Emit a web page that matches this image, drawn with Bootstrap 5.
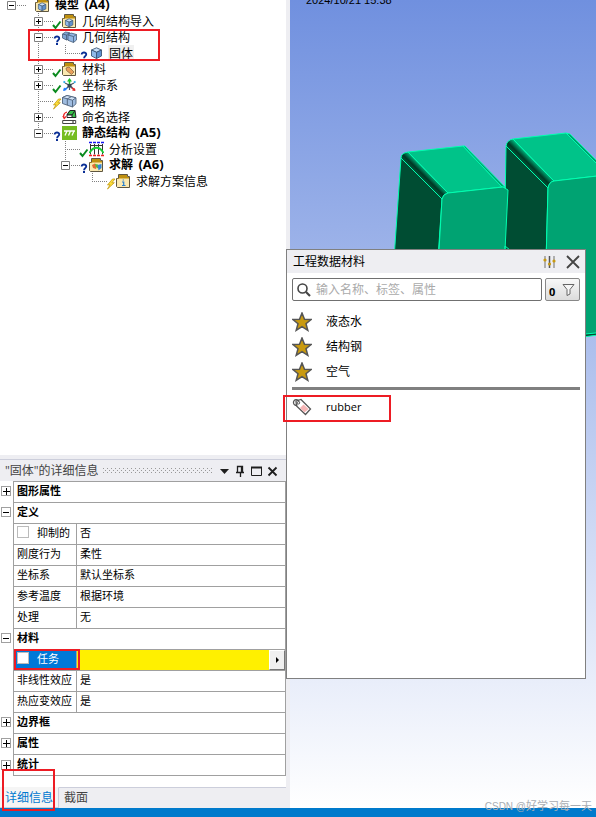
<!DOCTYPE html>
<html lang="zh-CN">
<head>
<meta charset="utf-8">
<meta name="viewport" content="width=device-width, initial-scale=1">
<title>工程数据材料</title>
<link href="https://cdn.jsdelivr.net/npm/bootstrap@5.3.0/dist/css/bootstrap.min.css" rel="stylesheet">
<style>
body{font-family:"Open Sans","Noto Sans CJK SC",sans-serif;font-size:12px;line-height:16px;color:#000;background:#eeeef2}
button{font-family:inherit}
.side-pane{flex:0 0 286px;width:286px}
.splitter{flex:0 0 4px;background:#eeeef2}
.tree-area{min-height:200px}
.tree-list{margin:-3px 0 0;padding-left:7px}
.tree-list li{display:flex;height:16px;white-space:nowrap}
.tree-list svg{flex:none}
.guide{width:27px;height:16px}
.own{width:28px;height:16px;overflow:visible}
.node-icon{width:15px;height:16px;margin-right:5px}
.node-label{padding:0 1px;margin-left:-1px;line-height:18px}
.node-label.picked{background:#f0f0f0}
b.node-label{line-height:16px}
.node-label i{font-style:normal;font-size:13px;line-height:14px;margin-left:2px}
.details{border-top:4px solid #eeeef2}
.details-head{height:22px;background:#eeeef2;border-top:1px solid #cccedb;color:#444;padding:0 6px 0 5px}
.grip{height:6px;margin:0 4px 0 4px;background:conic-gradient(from 270deg at 1px 1px,#999 90deg,transparent 0) 0 0/4px 4px,conic-gradient(from 270deg at 1px 1px,#999 90deg,transparent 0) 2px 2px/4px 4px}
.tool{border:0;background:none;padding:0;width:16px;height:16px;line-height:0}
.prop-table{width:100%;table-layout:fixed;font-size:11px;line-height:16px;border-collapse:separate;border-spacing:0}
.col-tog{width:13px}
.col-name{width:63px}
.prop-table th,.prop-table td{height:21px;padding:0 0 2px 3px;white-space:nowrap;overflow:hidden;font-weight:400;border-top:1px solid #a0a0a0}
.prop-table .c-tog{padding:0 0 1px 1px;border:0;line-height:0}
.prop-table .c-name,.prop-table .c-val{border-left:1px solid #a0a0a0}
.prop-table tr>:last-child{border-right:1px solid #a0a0a0}
.prop-table tr:last-child .c-name{border-bottom:1px solid #a0a0a0;height:22px}
.prop-table .sec{font-weight:700}
.tog{width:10px;height:10px;padding:0;border:1px solid #a0a0a0;background:#fff;line-height:0;display:block}
.tog svg{display:block}
.tick{appearance:none;width:12px;height:12px;border:1px solid #bbb;background:#fff;margin:0 8px 0 0;vertical-align:-1px}
.prop-table .active-name{background:#0078d7;color:#fff}
.prop-table .active-val{background:#fff000;padding:0}
.fly{width:16px;height:20px;background:#f0f0f0;border:1px solid #fff;border-right-color:#777;border-bottom-color:#777;padding:0;line-height:0}
.tab-row{height:21px;margin-top:11px;background:#eeeef2}
.tab-row button{border:0;border-top:1px solid #cccedb;background:none;padding:0 5px;color:#444;text-align:left}
.tab-row .rest{border-top:1px solid #cccedb}
.tab-row button.on{background:#f5f5f5;color:#0078d0;border-top-color:#f5f5f5;border-right:1px solid #cccedb;border-bottom:1px solid #cccedb;width:59px}
.view3d{background:linear-gradient(#7090df,#fff);min-width:0}
.stamp{font:11px/12px "Liberation Sans",sans-serif;margin:-6px 0 0 16px;white-space:nowrap}
.scene{left:0;top:0;width:306px;height:340px}
.status-strip{height:9px;background:#007acc}
.picker{left:286px;top:249px;width:300px;height:430px;background:#fff;border:1px solid #808080}
.picker-head{height:23px;background:#eeeef2;padding:0 4px 0 6px}
.search-row{gap:3px;padding:5px 5px 0}
.search-box{height:23px;border:1px solid #707070;border-radius:2px;padding-left:3px}
.search-box input{border:0;outline:0;background:none;min-width:0;padding:0;font-size:12px}
.search-box input::placeholder{color:#aaa;opacity:1}
.filter-btn{width:35px;height:23px;border:1px solid #888;border-radius:2px;background:linear-gradient(#f8f8f8,#dcdcdc);padding:0 4px 0 3px;font-size:11px}
.mat-list{padding:8px 5px 0}
.mat-list li{height:25px}
.mat-list button,.tagged button{border:0;background:none;padding:0;gap:14px;height:25px;width:100%;text-align:left}
.sep{height:3px;background:#808080;margin:3px 5px 0 5px}
.tagged{padding:4px 5px 0}
.tagged span{font-size:11px}
.note{border:2px solid #ed1c24;pointer-events:none}
.n1{left:28px;top:29px;width:132px;height:32px}
.n2{left:283px;top:395px;width:108px;height:27px}
.n3{left:14px;bottom:147px;width:66px;height:21px}
.n4{left:2px;bottom:6px;width:53px;height:42px}
.credit{right:4px;bottom:4px;color:#a9adb3;font-size:11px;font-family:"Noto Sans CJK SC",sans-serif;white-space:nowrap}
.credit span{font:10px "Liberation Sans",sans-serif}
</style>
<script src="https://cdn.jsdelivr.net/npm/bootstrap@5.3.0/dist/js/bootstrap.bundle.min.js"></script>
</head>
<body>
<svg width="0" height="0" class="position-absolute" aria-hidden="true">
<defs>
<g id="vfull" stroke="#808080" stroke-dasharray="1 1"><path d="M4.500 0V16"/></g>
<g id="vhalf" stroke="#808080" stroke-dasharray="1 1"><path d="M4.500 0V8"/></g>
<g id="hz" stroke="#808080" stroke-dasharray="1 1"><path d="M4 8.500H19"/></g>
<g id="plus"><path d="M.5 4.500h8v8h-8z" fill="#fff" stroke="#808080"/><path d="M2 8.500h5M4.500 6v5" stroke="#000"/></g>
<g id="minus"><path d="M.5 4.500h8v8h-8z" fill="#fff" stroke="#808080"/><path d="M2 8.500h5" stroke="#000"/></g>
<g id="ok"><path d="M19 12l2.500 3 5-6.500" fill="none" stroke="#0a8a1e" stroke-width="2"/></g>
<g id="ask"><path d="M20.700 9.500c-.2-2.600 4.800-2.600 4.500 0-.2 1.700-2.100 1.700-2.100 3.700" fill="none" stroke="#0a2f95" stroke-width="1.900"/><path d="M22 14h2v2h-2z" fill="#0a2f95"/></g>
<g id="bolt"><path d="M24.500 6l-5 6 2.600-.3-2.600 4.300 6.800-6.300-2.500.1L27 6z" fill="#ffe13a" stroke="#c39a10" stroke-width=".8"/></g>
<g id="folder"><path d="M.5 5.500h2v-4h9v2h2v11h-12l-1-1z" fill="#fbe9b0" stroke="#5f5640"/><path d="M3 2h8v2h2v1.500H1V5h2z" fill="#bf900f"/></g>
<g id="cube" stroke="#3b5676" stroke-width=".9" stroke-linejoin="round"><path d="M2.500 5l5-2.200 5 2.200-5 2.300z" fill="#c9e1fb"/><path d="M2.500 5v6l5 2.500V7.300z" fill="#8fb9ea"/><path d="M12.500 5v6l-5 2.500V7.300z" fill="#5f91cf"/></g>
<g id="minicube"><use href="#cube" transform="translate(1.500 3.700) scale(.75)"/></g>
<g id="parts" stroke="#455a75" stroke-width=".8" stroke-linejoin="round"><path d="M.5 5l3-2 4 .7v6l-3 1.300-4-2z" fill="#7ea4d2"/><path d="M.5 5l4 1 3-2.300M4.500 6v5" fill="none"/><path d="M6 6l3-2 5.500 1.500V11l-3 2.500L6 11.300z" fill="#90b6e4"/><path d="M6 6l5.500 1.500 3-2M11.500 7.500v6" fill="none"/></g>
<g id="meshi" stroke="#4e627c" stroke-width=".9" stroke-linejoin="round"><path d="M.5 4.500L5 2.500l9 2.300v6L10.500 14 .5 10.500z" fill="#9fbce0"/><path d="M.5 4.500l4.500-2 9 2.300-3.500 2.400z" fill="#d3e2f4"/><path d="M10.500 7.200V14M5.300 5.900v6.200M5.300 5.900l4-2.200" fill="none"/></g>
<g id="tagfold"><use href="#folder"/><path d="M4 7l3-1 5 5-2.500 2.500-5-4z" fill="#e9a15c" stroke="#8b6a45" stroke-width=".8"/></g>
<g id="axes" fill="none" stroke-width="1.600"><path d="M7.500 8V2.500" stroke="#18b428"/><path d="M5 4.500l2.500-3.500L10 4.500z" fill="#18c428"/><path d="M7.500 9l3 2M7.500 9L5 11" stroke="#4b5968"/><path d="M13.500 14l-1-3-2.500 2.500z" fill="#e02c2c"/><path d="M10 11l3 2" stroke="#e02c2c"/><path d="M8 8l4-2M7 8L3 6M7.500 9v4" stroke="#4b5968" stroke-width="1.200"/><path d="M1 14l1-3.500L4.700 13z" fill="#1d7cff"/><path d="M5 11l-3 2" stroke="#1d7cff"/><path d="M5.500 7h4v3h-4z" fill="#345"/><path d="M1.500 4.500l1.500 1M12 5.500l1.500-1" stroke="#18a6e8"/></g>
<g id="named"><path d="M5 6l3-4.500h5L14 8.500h-4z" fill="#37c24b" stroke="#222"/><path d="M5 6l3-4.500h5L10 6z" fill="#37c24b" stroke="#222"/><path d="M10 6v2.500H5V6z" fill="#fff" stroke="#222"/><path d="M2 9c-1-3 0-5 3-6M.8 7l1.400 2.500L4 7.500" fill="none" stroke="#ef2525" stroke-width="1.200"/><path d="M.7 11.500h13v3H.7z" fill="#fff" stroke="#444"/><path d="M10 13h2" stroke="#222"/></g>
<g id="static"><path d="M0 1h15v14H0z" fill="#76bd22"/><path d="M2 6h11M5 6l-2 4.500M8.500 6l-2 4.500M12 6l-2 4.500" stroke="#fff" stroke-width="1.300" fill="none"/></g>
<g id="analysis" fill="none"><path d="M1.500 3v10.500M5.500 3v10.500M9.500 3v10.500M13.500 3v10.500M1 4.500h13" stroke="#333"/><path d="M.5 12C4 5 11 5 14.500 12" stroke="#19ca35" stroke-width="1.800"/><path d="M0 1.500h3M4 1.500h3M8 1.500h3M12 1.500h3" stroke="#1515ef" stroke-width="1.500"/><path d="M0 14.500h3M4 14.500h3M8 14.500h3M12 14.500h3" stroke="#ef2020" stroke-width="1.600"/></g>
<g id="solve"><use href="#folder"/><path d="M3 8l3-1.500 2 2-1 3.500-3-1z" fill="#df6c34"/><path d="M6 7l3 .5v4L7 10z" fill="#52bd43"/><path d="M8.500 8l4-1v4l-3 2.500z" fill="#3385d8"/></g>
<g id="infofold"><use href="#folder"/><path d="M6 9h1.700v3.500M6 12.500h3.500M6.700 7h1.200" stroke="#2780d0" stroke-width="1.200" fill="none"/></g>
<g id="star"><path d="M10 1l2.500 6.200 6.700.3-5.200 4.200 1.800 6.600L10 14.600l-5.800 3.700L6 11.700.8 7.500l6.700-.3z" fill="#c99a10" stroke="#555" stroke-width="1.500"/></g>
<linearGradient id="r1" gradientUnits="userSpaceOnUse" x1="421" y1="179" x2="428" y2="172"><stop offset="0" stop-color="#005a3c"/><stop offset=".45" stop-color="#003724"/><stop offset="1" stop-color="#00ad78"/></linearGradient>
<linearGradient id="r2" gradientUnits="userSpaceOnUse" x1="527" y1="168" x2="534" y2="161"><stop offset="0" stop-color="#005a3c"/><stop offset=".45" stop-color="#003724"/><stop offset="1" stop-color="#00ad78"/></linearGradient>
</defs>
</svg>

<div class="d-flex flex-column min-vh-100 position-relative overflow-hidden">
<main class="d-flex flex-grow-1">
 <aside class="side-pane d-flex flex-column bg-white">
  <nav class="tree-area flex-grow-1 overflow-hidden" aria-label="模型树">
   <ul class="tree-list list-unstyled">
    <li><svg class="own"><use href="#hz"/><use href="#minus"/></svg><svg class="node-icon"><use href="#folder"/><use href="#minicube"/></svg><b class="node-label">模型<i> (A4)</i></b></li>
    <li><svg class="guide"></svg><svg class="own"><use href="#vfull"/><use href="#hz"/><use href="#plus"/><use href="#ok"/></svg><svg class="node-icon"><use href="#folder"/><use href="#minicube"/></svg><span class="node-label">几何结构导入</span></li>
    <li><svg class="guide"></svg><svg class="own"><use href="#vfull"/><use href="#hz"/><use href="#minus"/><use href="#ask"/></svg><svg class="node-icon"><use href="#parts"/></svg><span class="node-label">几何结构</span></li>
    <li><svg class="guide"></svg><svg class="guide"><use href="#vfull"/></svg><svg class="own"><use href="#vhalf"/><use href="#hz"/><use href="#ask"/></svg><svg class="node-icon"><use href="#cube"/></svg><span class="node-label picked">固体</span></li>
    <li><svg class="guide"></svg><svg class="own"><use href="#vfull"/><use href="#hz"/><use href="#plus"/><use href="#ok"/></svg><svg class="node-icon"><use href="#tagfold"/></svg><span class="node-label">材料</span></li>
    <li><svg class="guide"></svg><svg class="own"><use href="#vfull"/><use href="#hz"/><use href="#plus"/><use href="#ok"/></svg><svg class="node-icon"><use href="#axes"/></svg><span class="node-label">坐标系</span></li>
    <li><svg class="guide"></svg><svg class="own"><use href="#vfull"/><use href="#hz"/><use href="#bolt"/></svg><svg class="node-icon"><use href="#meshi"/></svg><span class="node-label">网格</span></li>
    <li><svg class="guide"></svg><svg class="own"><use href="#vfull"/><use href="#hz"/><use href="#plus"/></svg><svg class="node-icon"><use href="#named"/></svg><span class="node-label">命名选择</span></li>
    <li><svg class="guide"></svg><svg class="own"><use href="#vhalf"/><use href="#hz"/><use href="#minus"/><use href="#ask"/></svg><svg class="node-icon"><use href="#static"/></svg><b class="node-label">静态结构<i> (A5)</i></b></li>
    <li><svg class="guide"></svg><svg class="guide"></svg><svg class="own"><use href="#vfull"/><use href="#hz"/><use href="#ok"/></svg><svg class="node-icon"><use href="#analysis"/></svg><span class="node-label">分析设置</span></li>
    <li><svg class="guide"></svg><svg class="guide"></svg><svg class="own"><use href="#vhalf"/><use href="#hz"/><use href="#minus"/><use href="#ask"/></svg><svg class="node-icon"><use href="#solve"/></svg><b class="node-label">求解<i> (A6)</i></b></li>
    <li><svg class="guide"></svg><svg class="guide"></svg><svg class="guide"></svg><svg class="own"><use href="#vhalf"/><use href="#hz"/><use href="#bolt"/></svg><svg class="node-icon"><use href="#infofold"/></svg><span class="node-label">求解方案信息</span></li>
   </ul>
  </nav>
  <section class="details" aria-label="详细信息">
   <header class="details-head d-flex align-items-center">
    <span>"固体"的详细信息</span><span class="grip flex-grow-1"></span>
    <button class="tool" aria-label="菜单"><svg width="16" height="16"><path d="M4 6h9l-4.500 5z" fill="#1e1e1e"/></svg></button>
    <button class="tool" aria-label="固定"><svg width="16" height="16"><path d="M5.500 9V3.500h5V9M4 9.500h8M8.500 10v4M9.500 4v5" fill="none" stroke="#1e1e1e" stroke-width="1.300"/></svg></button>
    <button class="tool" aria-label="最大化"><svg width="16" height="16"><path d="M3.500 4v8.500h10V4" fill="none" stroke="#1e1e1e"/><path d="M3 4.500h11" stroke="#1e1e1e" stroke-width="2"/></svg></button>
    <button class="tool" aria-label="关闭"><svg width="16" height="16"><path d="M4.500 4.500l8 8M12.500 4.500l-8 8" stroke="#1e1e1e" stroke-width="1.800"/></svg></button>
   </header>
   <table class="prop-table">
    <colgroup><col class="col-tog"><col class="col-name"><col></colgroup>
    <tbody>
    <tr><td class="c-tog"><button class="tog" aria-label="展开"><svg width="8" height="8"><path d="M1 4.500h7M4.500 1v7" stroke="#000"/></svg></button></td><th class="c-name sec" colspan="2">图形属性</th></tr>
    <tr><td class="c-tog"><button class="tog" aria-label="折叠"><svg width="8" height="8"><path d="M1 4.500h6" stroke="#000"/></svg></button></td><th class="c-name sec" colspan="2">定义</th></tr>
    <tr><td class="c-tog"></td><th class="c-name"><input class="tick" type="checkbox" id="k1"><label for="k1">抑制的</label></th><td class="c-val">否</td></tr>
    <tr><td class="c-tog"></td><th class="c-name">刚度行为</th><td class="c-val">柔性</td></tr>
    <tr><td class="c-tog"></td><th class="c-name">坐标系</th><td class="c-val">默认坐标系</td></tr>
    <tr><td class="c-tog"></td><th class="c-name">参考温度</th><td class="c-val">根据环境</td></tr>
    <tr><td class="c-tog"></td><th class="c-name">处理</th><td class="c-val">无</td></tr>
    <tr><td class="c-tog"><button class="tog" aria-label="折叠"><svg width="8" height="8"><path d="M1 4.500h6" stroke="#000"/></svg></button></td><th class="c-name sec" colspan="2">材料</th></tr>
    <tr><td class="c-tog"></td><th class="c-name active-name"><input class="tick" type="checkbox" id="k2"><label for="k2">任务</label></th><td class="c-val active-val"><div class="d-flex justify-content-end"><button class="fly" aria-label="选择材料"><svg width="12" height="12"><path d="M5 3v6l3-3z"/></svg></button></div></td></tr>
    <tr><td class="c-tog"></td><th class="c-name">非线性效应</th><td class="c-val">是</td></tr>
    <tr><td class="c-tog"></td><th class="c-name">热应变效应</th><td class="c-val">是</td></tr>
    <tr><td class="c-tog"><button class="tog" aria-label="展开"><svg width="8" height="8"><path d="M1 4.500h7M4.500 1v7" stroke="#000"/></svg></button></td><th class="c-name sec" colspan="2">边界框</th></tr>
    <tr><td class="c-tog"><button class="tog" aria-label="展开"><svg width="8" height="8"><path d="M1 4.500h7M4.500 1v7" stroke="#000"/></svg></button></td><th class="c-name sec" colspan="2">属性</th></tr>
    <tr><td class="c-tog"><button class="tog" aria-label="展开"><svg width="8" height="8"><path d="M1 4.500h7M4.500 1v7" stroke="#000"/></svg></button></td><th class="c-name sec" colspan="2">统计</th></tr>
    </tbody>
   </table>
   <div class="tab-row d-flex"><button class="on">详细信息</button><button>截面</button><span class="rest flex-grow-1"></span></div>
  </section>
 </aside>
 <div class="splitter"></div>
 <section class="view3d flex-grow-1 position-relative overflow-hidden" aria-label="三维视图">
  <div class="stamp">2024/10/21 15:38</div>
  <svg class="scene position-absolute" viewBox="290 0 306 340" aria-hidden="true">
   <g stroke="#00ffb0" stroke-linejoin="round">
    <path d="M506 146L548 188 544 336H503z" fill="#004d33"/>
    <path d="M506 146q1-6 7-7l41 42q-5 1-6 7z" fill="url(#r2)"/>
    <path d="M513 139l53-6 40 40v2l-52 6z" fill="#00c389"/>
    <path d="M566 133l4 1 36 36v3z" fill="#009d6d"/>
    <path d="M548 188q1-6 6-7l52-6v157l-62 8z" fill="#00a372"/>
    <path d="M575 338l31-4v-2l-31 3z" fill="#004d33"/>
    <path d="M401 158l41 41-4 60h-44z" fill="#004d33"/>
    <path d="M401 158q0-5 7-6l40 41q-5 1-6 6z" fill="url(#r1)"/>
    <path d="M408 152l55-6 39 41-54 6z" fill="#00c389"/>
    <path d="M463 146l2 0 40 41-3 0z" fill="#009d6d"/>
    <path d="M442 199q1-5 6-6l55-6 5 3-3 60h-66z" fill="#00a372"/>
    <path d="M505 250v-4l5 4" fill="none"/>
   </g>
  </svg>
 </section>
</main>
<footer class="status-strip"></footer>

<section class="picker position-absolute" role="dialog" aria-label="工程数据材料">
 <header class="picker-head d-flex align-items-center">
  <span class="flex-grow-1">工程数据材料</span>
  <button class="tool me-2" aria-label="设置"><svg width="16" height="16"><path d="M4 2v12M13 2v12" stroke="#999" stroke-width="1.500"/><path d="M8.500 2v12" stroke="#555" stroke-width="1.500"/><circle cx="4" cy="6" r="1.600" fill="#c99a10"/><circle cx="8.500" cy="10" r="1.600" fill="#c99a10"/><circle cx="13" cy="7" r="1.600" fill="#c99a10"/></svg></button>
  <button class="tool" aria-label="关闭"><svg width="16" height="16"><path d="M2 2l12 12M14 2L2 14" stroke="#444" stroke-width="1.800"/></svg></button>
 </header>
 <div class="search-row d-flex">
  <label class="search-box d-flex align-items-center flex-grow-1 gap-1"><svg width="16" height="16" aria-hidden="true"><circle cx="6.500" cy="6.500" r="4.500" fill="none" stroke="#444" stroke-width="1.600"/><path d="M10 10l4 4" stroke="#444" stroke-width="2.200"/></svg><input class="flex-grow-1" type="text" placeholder="输入名称、标签、属性" aria-label="搜索"></label>
  <button class="filter-btn d-flex justify-content-between align-items-center" aria-label="筛选"><b class="mt-1">0</b><svg width="13" height="14"><path d="M1 1.500h11L8 6.500V11l-3 1.500v-6z" fill="#f7f7f7" stroke="#666"/></svg></button>
 </div>
 <ul class="mat-list list-unstyled mb-0">
  <li><button class="d-flex align-items-center"><svg width="20" height="20"><use href="#star"/></svg><span>液态水</span></button></li>
  <li><button class="d-flex align-items-center"><svg width="20" height="20"><use href="#star"/></svg><span>结构钢</span></button></li>
  <li><button class="d-flex align-items-center"><svg width="20" height="20"><use href="#star"/></svg><span>空气</span></button></li>
 </ul>
 <div class="sep"></div>
 <div class="tagged"><button class="d-flex align-items-center"><svg width="20" height="20"><path d="M4 4l5-1.500 9.500 9.500-5 5.500L4.500 9z" fill="#fff" stroke="#555" stroke-width="1.300"/><path d="M11.500 7.500l5 4.500-4 3.500-4.500-4.500z" fill="#f5b5b5"/><path d="M7 6c0-5-6-4-5.500 0 .2 2 2.500 3 4 1.500" fill="none" stroke="#555" stroke-width="1.300"/><circle cx="6.500" cy="5.800" r="1.200" fill="#fff" stroke="#555"/></svg><span>rubber</span></button></div>
</section>

<div class="note n1 position-absolute"></div>
<div class="note n2 position-absolute"></div>
<div class="note n3 position-absolute"></div>
<div class="note n4 position-absolute"></div>
<div class="credit position-absolute"><span>CSDN @</span>好学习每一天</div>
</div>
</body>
</html>
